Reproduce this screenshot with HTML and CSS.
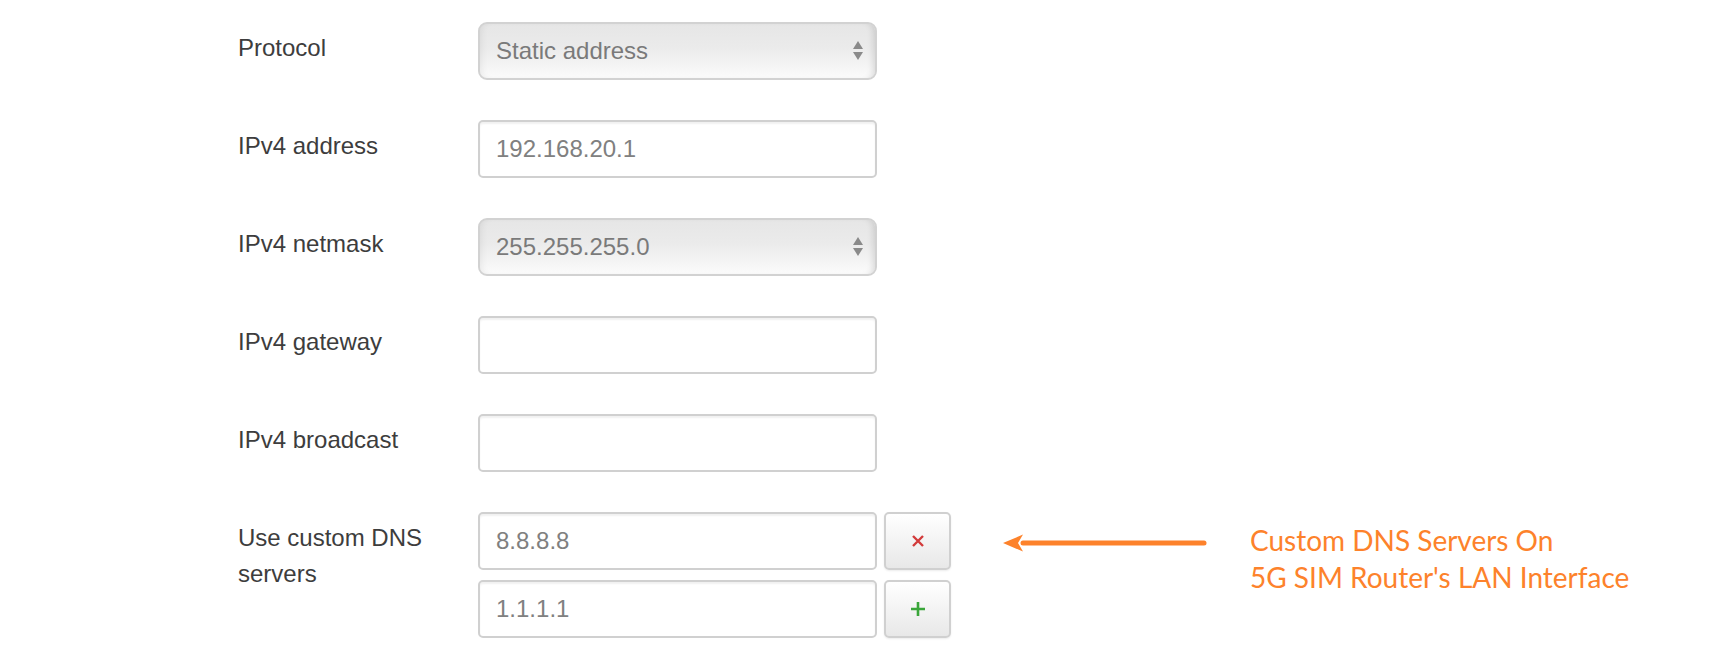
FILE: index.html
```html
<!DOCTYPE html>
<html>
<head>
<meta charset="utf-8">
<link rel="stylesheet" href="styles.css">
</head>
<body>
<div class="form">
  <div class="row">
    <div class="label">Protocol</div>
    <div class="field">
      <div class="select"><span>Static address</span>
        <svg class="updown" width="12" height="20" viewBox="0 0 12 20"><path d="M6 0 L11 8 L1 8 Z M1 11 L11 11 L6 19 Z" fill="#8a8a8a"/></svg>
      </div>
    </div>
  </div>
  <div class="row">
    <div class="label">IPv4 address</div>
    <div class="field"><div class="input">192.168.20.1</div></div>
  </div>
  <div class="row">
    <div class="label">IPv4 netmask</div>
    <div class="field">
      <div class="select"><span>255.255.255.0</span>
        <svg class="updown" width="12" height="20" viewBox="0 0 12 20"><path d="M6 0 L11 8 L1 8 Z M1 11 L11 11 L6 19 Z" fill="#8a8a8a"/></svg>
      </div>
    </div>
  </div>
  <div class="row">
    <div class="label">IPv4 gateway</div>
    <div class="field"><div class="input"></div></div>
  </div>
  <div class="row">
    <div class="label">IPv4 broadcast</div>
    <div class="field"><div class="input"></div></div>
  </div>
  <div class="row dns">
    <div class="label">Use custom DNS servers</div>
    <div class="dnslist">
      <div class="dnsitem">
        <div class="input">8.8.8.8</div>
        <div class="btn"><svg width="14" height="14" viewBox="0 0 14 14"><path d="M2 2 L12 12 M12 2 L2 12" stroke="#d23b3b" stroke-width="2.4"/></svg></div>
      </div>
      <div class="dnsitem">
        <div class="input">1.1.1.1</div>
        <div class="btn"><svg width="16" height="16" viewBox="0 0 16 16"><path d="M8 1 V15 M1 8 H15" stroke="#3aa63a" stroke-width="2.6"/></svg></div>
      </div>
    </div>
    <svg class="arrow" width="204" height="20" viewBox="0 0 204 20"><path d="M20 10 H201" stroke="#fd822b" stroke-width="5" stroke-linecap="round"/><path d="M0 10 L20 1.5 L15 10 L20 18.5 Z" fill="#fd822b"/></svg>
    <div class="note">Custom DNS Servers On<br>5G SIM Router's LAN Interface</div>
  </div>
</div>
</body>
</html>
```
FILE: styles.css
```css
* { box-sizing: border-box; }
html, body { margin: 0; padding: 0; background: #fff; }
body {
  width: 1722px;
  height: 666px;
  overflow: hidden;
  font-family: "Liberation Sans", Arial, sans-serif;
}
.form {
  display: flex;
  flex-direction: column;
  gap: 40px;
  padding: 22px 0 0 238px;
}
.row {
  display: flex;
  align-items: flex-start;
}
.label {
  width: 240px;
  padding: 8px 20px 0 0;
  font-size: 24px;
  line-height: 36px;
  color: #3d3d3d;
}
.field { width: 399px; }
.input {
  width: 399px;
  height: 58px;
  border: 2px solid #d0d0d0;
  border-radius: 5px;
  background: #fff;
  box-shadow: inset 0 2px 2px rgba(0,0,0,0.06);
  padding: 0 16px;
  display: flex;
  align-items: center;
  font-size: 24px;
  color: #808080;
}
.select {
  width: 399px;
  height: 58px;
  border: 2px solid #d2d2d2;
  border-radius: 9px;
  background: linear-gradient(#e6e6e6, #ebebeb 45%, #fbfbfb);
  box-shadow: inset -6px 0 6px -4px rgba(0,0,0,0.12), inset 6px 0 6px -4px rgba(0,0,0,0.06);
  display: flex;
  align-items: center;
  justify-content: space-between;
  padding: 0 11px 0 16px;
  font-size: 24px;
  color: #7a7a7a;
}
.updown { display: block; }
.dnslist {
  display: flex;
  flex-direction: column;
  gap: 10px;
}
.dnsitem {
  display: flex;
  gap: 7px;
}
.btn {
  width: 67px;
  height: 58px;
  border: 2px solid #d0d0d0;
  border-radius: 5px;
  background: linear-gradient(#ffffff, #e8e8e8);
  box-shadow: 0 1px 2px rgba(0,0,0,0.08);
  display: flex;
  align-items: center;
  justify-content: center;
}
.arrow {
  display: block;
  margin: 21px 0 0 52px;
}
.note {
  margin: 10px 0 0 43px;
  font-family: Lato, "Open Sans", sans-serif;
  font-size: 28px;
  line-height: 37px;
  color: #fd822b;
}
```
